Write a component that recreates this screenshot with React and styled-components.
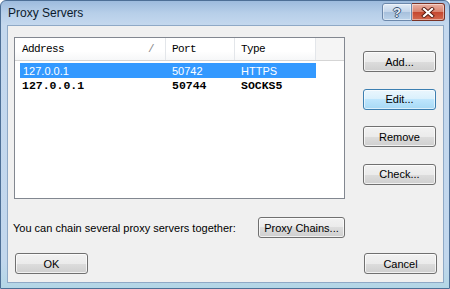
import React from 'react';
import styled, { createGlobalStyle } from 'styled-components';

const GlobalStyle = createGlobalStyle`
  html, body {
    margin: 0;
    padding: 0;
    background: #ffffff;
  }
  * {
    box-sizing: border-box;
  }
`;

const uiFont = `"Segoe UI", "Liberation Sans", Arial, sans-serif`;
const listFont = `"SimSun", "Liberation Mono", "Courier New", monospace`;

const Window = styled.div`
  width: 450px;
  height: 289px;
  display: flex;
  flex-direction: column;
  border: 1px solid #4d6f96;
  border-radius: 6px 6px 0 0;
  background: linear-gradient(180deg, #9dbbdd 0px, #b7cfe9 12px, #c4d8ee 24px, #c2d7ed 90%, #b3d6e6 100%);
  font-family: ${uiFont};
  overflow: hidden;
`;

const TitleBar = styled.div`
  height: 24px;
  display: flex;
  align-items: flex-start;
  padding-left: 7px;
`;

const Title = styled.div`
  font-size: 12px;
  line-height: 24px;
  color: #0b1a2c;
`;

const CaptionGroup = styled.div`
  margin-left: auto;
  margin-top: 2px;
  margin-right: 4px;
  display: flex;
`;

const CaptionButton = styled.div`
  width: ${p => p.$w}px;
  height: 18px;
  display: flex;
  align-items: center;
  justify-content: center;
  border: 1px solid ${p => (p.$close ? '#7a3326' : '#6c88ab')};
  border-radius: ${p => (p.$close ? '0 3px 3px 0' : '3px 0 0 3px')};
  border-left-width: ${p => (p.$close ? 0 : 1)}px;
  background: ${p =>
    p.$close
      ? 'linear-gradient(180deg, #eab1a3 0%, #d98470 48%, #c5472f 52%, #d3694f 100%)'
      : 'linear-gradient(180deg, #e2ecf7 0%, #c3d5ea 48%, #a7c0dc 52%, #bcd3ea 100%)'};
  box-shadow: inset 0 0 0 1px rgba(255, 255, 255, 0.45);
`;

const HelpGlyph = styled.span`
  font-family: "Liberation Sans", Arial, sans-serif;
  font-weight: bold;
  font-size: 13px;
  line-height: 1;
  color: #e8eef6;
  text-shadow: 1px 0 0 #3a5474, -1px 0 0 #3a5474, 0 1px 0 #3a5474, 0 -1px 0 #3a5474;
`;

const Client = styled.div`
  flex: 1;
  margin: 0 5px 5px 6px;
  border: 1px solid #8fa9c6;
  background: #f0f0f0;
  padding-top: 11px;
  display: flex;
  flex-direction: column;
`;

const TopRow = styled.div`
  display: flex;
  align-items: flex-start;
  padding-left: 6px;
`;

const ListBox = styled.div`
  width: 331px;
  height: 162px;
  border: 1px solid #828790;
  background: #ffffff;
`;

const Header = styled.div`
  display: flex;
  height: 23px;
  border-bottom: 1px solid #d5d5d5;
  background: linear-gradient(180deg, #ffffff 0%, #ffffff 60%, #f6f7f8 100%);
`;

const HeaderCell = styled.div`
  width: ${p => p.$w}px;
  flex: ${p => (p.$fill ? 1 : 'none')};
  display: flex;
  align-items: center;
  padding-left: ${p => p.$pad}px;
  border-right: ${p => (p.$fill ? 'none' : '1px solid #e3e6ea')};
  background: ${p => (p.$fill ? '#f5f5f5' : 'transparent')};
  font-family: ${listFont};
  font-size: 11px;
  letter-spacing: -0.6px;
  color: #000000;
`;

const SortMark = styled.span`
  margin-left: auto;
  margin-right: 11px;
  color: #8a8a8a;
`;

const Rows = styled.div`
  padding: 2px 0 0 5px;
`;

const Row = styled.div`
  display: flex;
  width: 296px;
  height: 15px;
  align-items: center;
  background: ${p => (p.$selected ? '#3399ff' : 'transparent')};
  color: ${p => (p.$selected ? '#ffffff' : '#000000')};
  font-family: ${p => (p.$selected ? uiFont : listFont)};
  font-size: ${p => (p.$selected ? 11 : 11.5)}px;
  font-weight: ${p => (p.$selected ? 'normal' : 'bold')};
`;

const Cell = styled.div`
  width: ${p => p.$w}px;
  padding-left: ${p => p.$pad}px;
  white-space: nowrap;
`;

const ButtonColumn = styled.div`
  display: flex;
  flex-direction: column;
  gap: 16.5px;
  margin-left: 18px;
  padding-top: 14px;
`;

const Button = styled.div`
  width: ${p => p.$w || 73}px;
  height: 21px;
  display: flex;
  align-items: center;
  justify-content: center;
  border: 1px solid ${p => (p.$focused ? '#3c7fb1' : '#707070')};
  border-radius: 3px;
  background: ${p =>
    p.$focused
      ? 'linear-gradient(180deg, #eaf6fd 0%, #d9f0fc 50%, #bee6fd 50%, #a7d9f5 100%)'
      : 'linear-gradient(180deg, #f2f2f2 0%, #ebebeb 50%, #dddddd 50%, #cfcfcf 100%)'};
  box-shadow: inset 0 0 0 1px ${p => (p.$focused ? 'rgba(255,255,255,0.6)' : 'rgba(255,255,255,0.7)')};
  font-size: 11px;
  color: #000000;
`;

const ChainRow = styled.div`
  display: flex;
  align-items: center;
  width: 337px;
  margin-top: 18px;
  padding-left: 5px;
  justify-content: space-between;
`;

const ChainText = styled.span`
  font-size: 11px;
  color: #000000;
`;

const Footer = styled.div`
  display: flex;
  justify-content: space-between;
  margin-top: 15px;
  padding: 0 6px 0 7px;
`;

const CloseIcon = () => (
  <svg width="14" height="11" viewBox="0 0 14 11">
    <path d="M3 2 L11 9 M11 2 L3 9" stroke="#5a1d12" strokeWidth="4" strokeLinecap="square" />
    <path d="M3 2 L11 9 M11 2 L3 9" stroke="#ffffff" strokeWidth="2.2" strokeLinecap="square" />
  </svg>
);

const servers = [
  { address: '127.0.0.1', port: '50742', type: 'HTTPS', selected: true },
  { address: '127.0.0.1', port: '50744', type: 'SOCKS5', selected: false },
];

const App = () => (
  <>
    <GlobalStyle />
    <Window>
      <TitleBar>
        <Title>Proxy Servers</Title>
        <CaptionGroup>
          <CaptionButton $w={30}>
            <HelpGlyph>?</HelpGlyph>
          </CaptionButton>
          <CaptionButton $w={33} $close>
            <CloseIcon />
          </CaptionButton>
        </CaptionGroup>
      </TitleBar>
      <Client>
        <TopRow>
          <ListBox>
            <Header>
              <HeaderCell $w={151} $pad={7}>
                Address<SortMark>/</SortMark>
              </HeaderCell>
              <HeaderCell $w={69} $pad={6}>Port</HeaderCell>
              <HeaderCell $w={81} $pad={6}>Type</HeaderCell>
              <HeaderCell $fill />
            </Header>
            <Rows>
              {servers.map((s, i) => (
                <Row key={i} $selected={s.selected}>
                  <Cell $w={146} $pad={s.selected ? 3 : 2}>{s.address}</Cell>
                  <Cell $w={69} $pad={6}>{s.port}</Cell>
                  <Cell $w={81} $pad={6}>{s.type}</Cell>
                </Row>
              ))}
            </Rows>
          </ListBox>
          <ButtonColumn>
            <Button>Add...</Button>
            <Button $focused>Edit...</Button>
            <Button>Remove</Button>
            <Button>Check...</Button>
          </ButtonColumn>
        </TopRow>
        <ChainRow>
          <ChainText>You can chain several proxy servers together:</ChainText>
          <Button $w={87}>Proxy Chains...</Button>
        </ChainRow>
        <Footer>
          <Button>OK</Button>
          <Button>Cancel</Button>
        </Footer>
      </Client>
    </Window>
  </>
);

export default App;
